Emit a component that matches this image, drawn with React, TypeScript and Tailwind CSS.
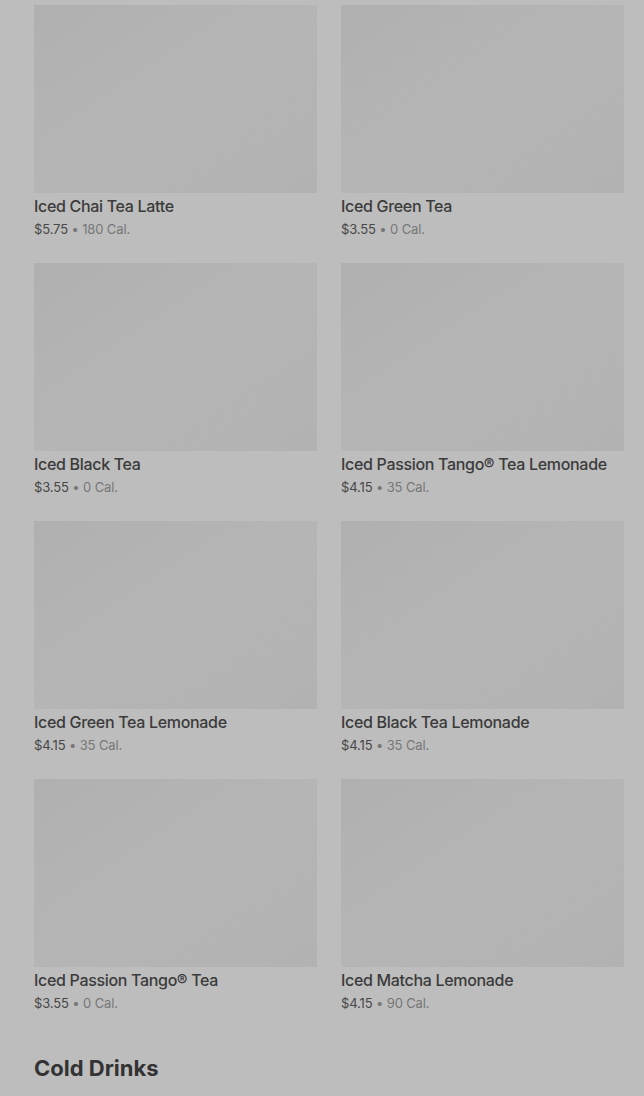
import React from 'react';

type Item = { name: string; price: string; cal: string };

const items: Item[] = [
  { name: 'Iced Chai Tea Latte', price: '$5.75', cal: '180 Cal.' },
  { name: 'Iced Green Tea', price: '$3.55', cal: '0 Cal.' },
  { name: 'Iced Black Tea', price: '$3.55', cal: '0 Cal.' },
  { name: 'Iced Passion Tango® Tea Lemonade', price: '$4.15', cal: '35 Cal.' },
  { name: 'Iced Green Tea Lemonade', price: '$4.15', cal: '35 Cal.' },
  { name: 'Iced Black Tea Lemonade', price: '$4.15', cal: '35 Cal.' },
  { name: 'Iced Passion Tango® Tea', price: '$3.55', cal: '0 Cal.' },
  { name: 'Iced Matcha Lemonade', price: '$4.15', cal: '90 Cal.' },
];

const MenuCard: React.FC<{ item: Item }> = ({ item }) => {
  return (
    <div className="flex flex-col">
      <div className="h-[188px] w-full bg-gradient-to-br from-[#b0b0b0] via-[#b5b5b5] to-[#b2b2b2]" />
      <div className="mt-[3px] text-[16px] leading-[20px] font-medium tracking-[-0.02em] text-[#3b3b3b] whitespace-nowrap">
        {item.name}
      </div>
      <div className="mt-[4px] text-[13px] leading-[18px] tracking-[-0.01em] text-[#474747]">
        {item.price}
        <span className="text-[#777777]"> • {item.cal}</span>
      </div>
    </div>
  );
};

export default function App() {
  return (
    <div
      className="w-[644px] h-[1096px] overflow-hidden bg-[#bdbdbd] pl-[34px] pt-[5px]"
      style={{ fontFamily: 'Inter, "Noto Sans", sans-serif' }}
    >
      <div className="grid grid-cols-[283px_283px] gap-x-[24px] gap-y-[25px]">
        {items.map((item) => (
          <MenuCard key={item.name} item={item} />
        ))}
      </div>
      <h2 className="mt-[40px] text-[22px] leading-[32px] font-bold tracking-[0em] text-[#333333]">
        Cold Drinks
      </h2>
    </div>
  );
}
